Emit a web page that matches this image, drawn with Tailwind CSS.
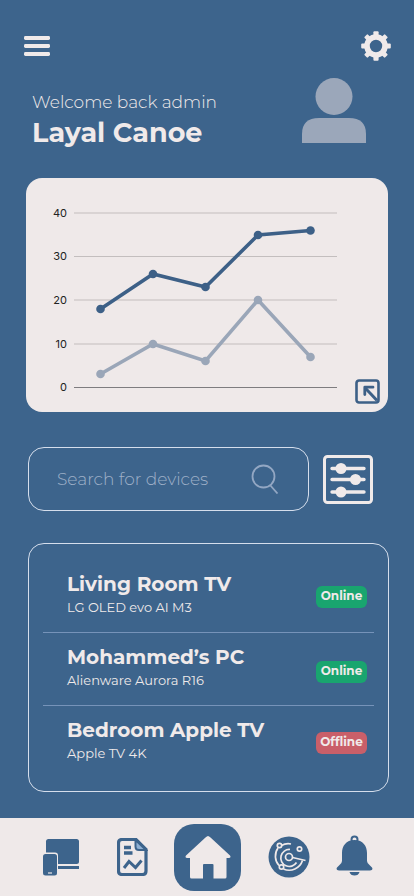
<!DOCTYPE html>
<html lang="en">
<head>
<meta charset="utf-8">
<meta name="viewport" content="width=device-width, initial-scale=1">
<title>Device dashboard</title>
<script src="https://cdn.jsdelivr.net/npm/@tailwindcss/browser@4"></script>
</head>
<body class="flex min-h-screen flex-col bg-[#3d648c] font-['Montserrat','Inter','Liberation_Sans',sans-serif] text-[#f0eaea]">
  <header>
    <div class="flex items-center justify-between pt-[31px] pr-[23px] pl-6">
      <button type="button" aria-label="Menu" class="block">
        <svg class="block h-5 w-[26px]" viewBox="0 0 26 20" fill="currentColor"><rect width="26" height="4" rx="1.4"/><rect y="8" width="26" height="4" rx="1.4"/><rect y="16" width="26" height="4" rx="1.4"/></svg>
      </button>
      <button type="button" aria-label="Settings" class="block">
        <svg class="block size-[30px]" viewBox="-15 -15 30 30" fill="currentColor">
          <circle r="9" fill="none" stroke="currentColor" stroke-width="5.6"/>
          <g><rect x="-2.6" y="-14.8" width="5.2" height="5" rx="1"/><rect x="-2.6" y="9.8" width="5.2" height="5" rx="1"/><rect x="-14.8" y="-2.6" width="5" height="5.2" rx="1"/><rect x="9.8" y="-2.6" width="5" height="5.2" rx="1"/></g>
          <g transform="rotate(45)"><rect x="-2.4" y="-14.6" width="4.8" height="5" rx="1"/><rect x="-2.4" y="9.6" width="4.8" height="5" rx="1"/><rect x="-14.6" y="-2.4" width="5" height="4.8" rx="1"/><rect x="9.6" y="-2.4" width="5" height="4.8" rx="1"/></g>
        </svg>
      </button>
    </div>
    <div class="flex items-start justify-between pt-4 pr-12 pl-8">
      <div class="pt-[13px]">
        <p class="text-[17px] leading-6 font-light">Welcome back admin</p>
        <h1 class="text-[27px] leading-[38px] font-bold">Layal Canoe</h1>
      </div>
      <svg class="block h-[66px] w-16" viewBox="0 0 64 66" fill="#9ba7ba" role="img" aria-label="Profile"><circle cx="32" cy="19.5" r="18.5"/><path d="M0 66V57Q0 41 17 41H47Q64 41 64 57V66Z"/></svg>
    </div>
  </header>

  <main class="flex flex-col pt-[26px]">
    <section class="relative mx-[26px] rounded-2xl bg-[#efe9e9]" aria-label="Activity">
      <svg class="block h-auto w-full" viewBox="0 0 362 234" role="img" aria-label="Line chart">
        <path d="M48 35H311M48 78.500H311M48 122H311M48 166H311" stroke="#c3bebe" stroke-width="1.200"/>
        <path d="M48 209.500H311" stroke="#7e7c7f" stroke-width="1.200"/>
        <g class="font-['Inter',sans-serif]" fill="#222" font-size="11" text-anchor="end"><text x="41" y="39">40</text><text x="41" y="82">30</text><text x="41" y="126">20</text><text x="41" y="170">10</text><text x="41" y="213">0</text></g>
        <g fill="#9aa6b8"><path d="M74.500 196L127 166L179.500 183L232 122L284.500 179" fill="none" stroke="#9aa6b8" stroke-width="3.600"/><circle cx="74.500" cy="196" r="4.300"/><circle cx="127" cy="166" r="4.300"/><circle cx="179.500" cy="183" r="4.300"/><circle cx="232" cy="122" r="4.300"/><circle cx="284.500" cy="179" r="4.300"/></g>
        <g fill="#3d6087"><path d="M74.500 131L127 96L179.500 109L232 57L284.500 52.500" fill="none" stroke="#3d6087" stroke-width="3.600"/><circle cx="74.500" cy="131" r="4.300"/><circle cx="127" cy="96" r="4.300"/><circle cx="179.500" cy="109" r="4.300"/><circle cx="232" cy="57" r="4.300"/><circle cx="284.500" cy="52.500" r="4.300"/></g>
      </svg>
      <button type="button" aria-label="Expand chart" class="absolute right-2 bottom-2 block">
        <svg class="block size-[25px]" viewBox="0 0 25 25" fill="none" stroke="#3d6087"><rect x="1.500" y="1.500" width="22" height="22" rx="2.500" stroke-width="2.600"/><path d="M10 8.800L22 21.500" stroke-width="3"/><path d="M9.800 15.500V8.200H18" stroke-width="2.800" stroke-linecap="round" stroke-linejoin="round"/></svg>
      </button>
    </section>

    <form class="flex items-center gap-3.5 pt-[35px] pr-[41px] pl-7">
      <div class="flex h-16 min-w-0 flex-1 items-center rounded-2xl border border-[#d5deec] pr-[29px] pl-7">
        <input type="text" aria-label="Search for devices" placeholder="Search for devices" class="h-8 min-w-0 flex-1 bg-transparent text-[17px] leading-8 font-light outline-none placeholder:text-[#9fb0c8]">
        <button type="submit" aria-label="Search" class="block shrink-0">
          <svg class="block h-[30px] w-7" viewBox="0 0 28 30" fill="none" stroke="#93a7c3" stroke-width="1.800"><circle cx="12.500" cy="12.500" r="11"/><path d="M19 21L26.500 29.500"/></svg>
        </button>
      </div>
      <button type="button" aria-label="Filters" class="block shrink-0">
        <svg class="block size-[50px]" viewBox="0 0 50 50" fill="currentColor" stroke="currentColor" stroke-linecap="round"><rect x="1.500" y="2.500" width="47" height="46" rx="3" fill="none" stroke-width="3"/><path d="M9 14.500H41M9 25.500H41M9 38H41" stroke-width="3.400"/><g stroke="none"><circle cx="18" cy="14.500" r="5.500"/><circle cx="32.500" cy="25.500" r="5.500"/><circle cx="18" cy="38" r="5.500"/></g></svg>
      </button>
    </form>

    <ul class="mt-8 mr-[25px] mb-6 ml-7 rounded-2xl border border-[#d5deec] px-3.5 pt-[15px] pb-3">
      <li class="flex h-[74px] items-center justify-between border-b border-[#7693b9] pr-[7px] pb-0.5 pl-6">
        <div><h2 class="text-xl leading-6 font-bold">Living Room TV</h2><p class="text-[13px] leading-[22px]">LG OLED evo AI M3</p></div>
        <span class="mt-1 flex h-[22px] w-[51px] justify-center rounded-md bg-[#19a56f] text-xs leading-5 font-bold">Online</span>
      </li>
      <li class="flex h-[73px] items-center justify-between border-b border-[#7693b9] pr-[7px] pb-0.5 pl-6">
        <div><h2 class="text-xl leading-6 font-bold">Mohammed’s PC</h2><p class="text-[13px] leading-[22px]">Alienware Aurora R16</p></div>
        <span class="mt-2 flex h-[22px] w-[51px] justify-center rounded-md bg-[#19a56f] text-xs leading-5 font-bold">Online</span>
      </li>
      <li class="flex h-[73px] items-center justify-between pr-[7px] pb-1 pl-6">
        <div><h2 class="text-xl leading-6 font-bold">Bedroom Apple TV</h2><p class="text-[13px] leading-[22px]">Apple TV 4K</p></div>
        <span class="mt-1 flex h-[22px] w-[51px] justify-center rounded-md bg-[#c95f69] text-xs leading-5 font-bold">Offline</span>
      </li>
    </ul>
  </main>

  <nav class="mt-auto flex h-[78px] items-center justify-between bg-[#efe9e9] pr-[41px] pl-[42px] text-[#3d648c]" aria-label="Main">
    <a href="#devices" aria-label="Devices" class="pr-2.5">
      <svg class="block h-[38px] w-[38px]" viewBox="0 0 38 38" fill="currentColor"><rect x="4" y="1" width="33" height="25" rx="2.500"/><rect x="14" y="28" width="23" height="3"/><rect x="0" y="14.500" width="16" height="24" rx="3" fill="#efe9e9"/><rect x="1" y="16" width="14" height="21.500" rx="2.500"/><path d="M6 35H10" stroke="#efe9e9" stroke-width="1.200"/></svg>
    </a>
    <a href="#reports" aria-label="Reports">
      <svg class="block h-[38px] w-[31px]" viewBox="0 0 31 38" fill="none" stroke="currentColor"><path d="M5 1.500H19L29 11.500V33Q29 36.500 25.500 36.500H5Q1.500 36.500 1.500 33V5Q1.500 1.500 5 1.500Z" stroke-width="3.200"/><path d="M18.500 2V8.500Q18.500 12 22 12H29Z" fill="#8fb0d3" stroke-width="2"/><path d="M7 9.500H14M7 15H15.500" stroke-width="3.400"/><path d="M7 30L12 23.500L18.500 29.500L24.500 22.500" stroke-width="3"/></svg>
    </a>
    <a href="#home" aria-label="Home" aria-current="page" class="flex size-[67px] items-center justify-center rounded-[20px] bg-[#3d648c] text-[#efe9e9]">
      <svg class="block h-[44px] w-[46px]" viewBox="0 0 46 44" fill="currentColor"><path d="M23 1Q24 1 25.500 2.500L45 20.500Q46.500 23 43.500 23H41.500V42Q41.500 43.500 40 43.500H28.500V30Q28.500 29 27.500 29H19Q18 29 18 30V43.500H6.500Q5 43.500 5 42V23H2.500Q-.5 23 1 20.500L20.500 2.500Q22 1 23 1Z"/></svg>
    </a>
    <a href="#scan" aria-label="Network scan">
      <svg class="block size-[42px]" viewBox="0 0 42 42" fill="none" stroke="#efe9e9" stroke-width="1.700"><circle cx="21" cy="21" r="20.500" fill="#3d648c" stroke="none"/><path d="M23 8A13.500 13.500 0 0 0 13.500 9.500M10 12A14 14 0 0 0 11 29.500M15.500 33A14 14 0 0 0 34.500 24.500"/><path d="M22 13.500A8.500 8.500 0 1 0 28.500 26.500"/><circle cx="21" cy="21" r="3.500"/><path d="M24.500 21.500L37.500 24.500"/><circle cx="31.500" cy="13" r="2.200"/><circle cx="11.500" cy="9.500" r="2.200"/><circle cx="13.500" cy="31" r="2.200"/></svg>
    </a>
    <a href="#alerts" aria-label="Notifications" class="pb-1">
      <svg class="block h-[41px] w-[37px]" viewBox="0 0 37 41" fill="currentColor"><circle cx="18.500" cy="4.500" r="3" fill="none" stroke="currentColor" stroke-width="2"/><path d="M18.500 5C10 5 6 11 6 18V26Q6 28 3.500 30L1 32.500Q-.5 35.500 3 35.500H34Q37.500 35.500 36 32.500L33.500 30Q31 28 31 26V18C31 11 27 5 18.500 5Z"/><path d="M13.500 37H23.500Q22.500 40.500 18.500 40.500T13.500 37Z"/></svg>
    </a>
  </nav>
</body>
</html>
